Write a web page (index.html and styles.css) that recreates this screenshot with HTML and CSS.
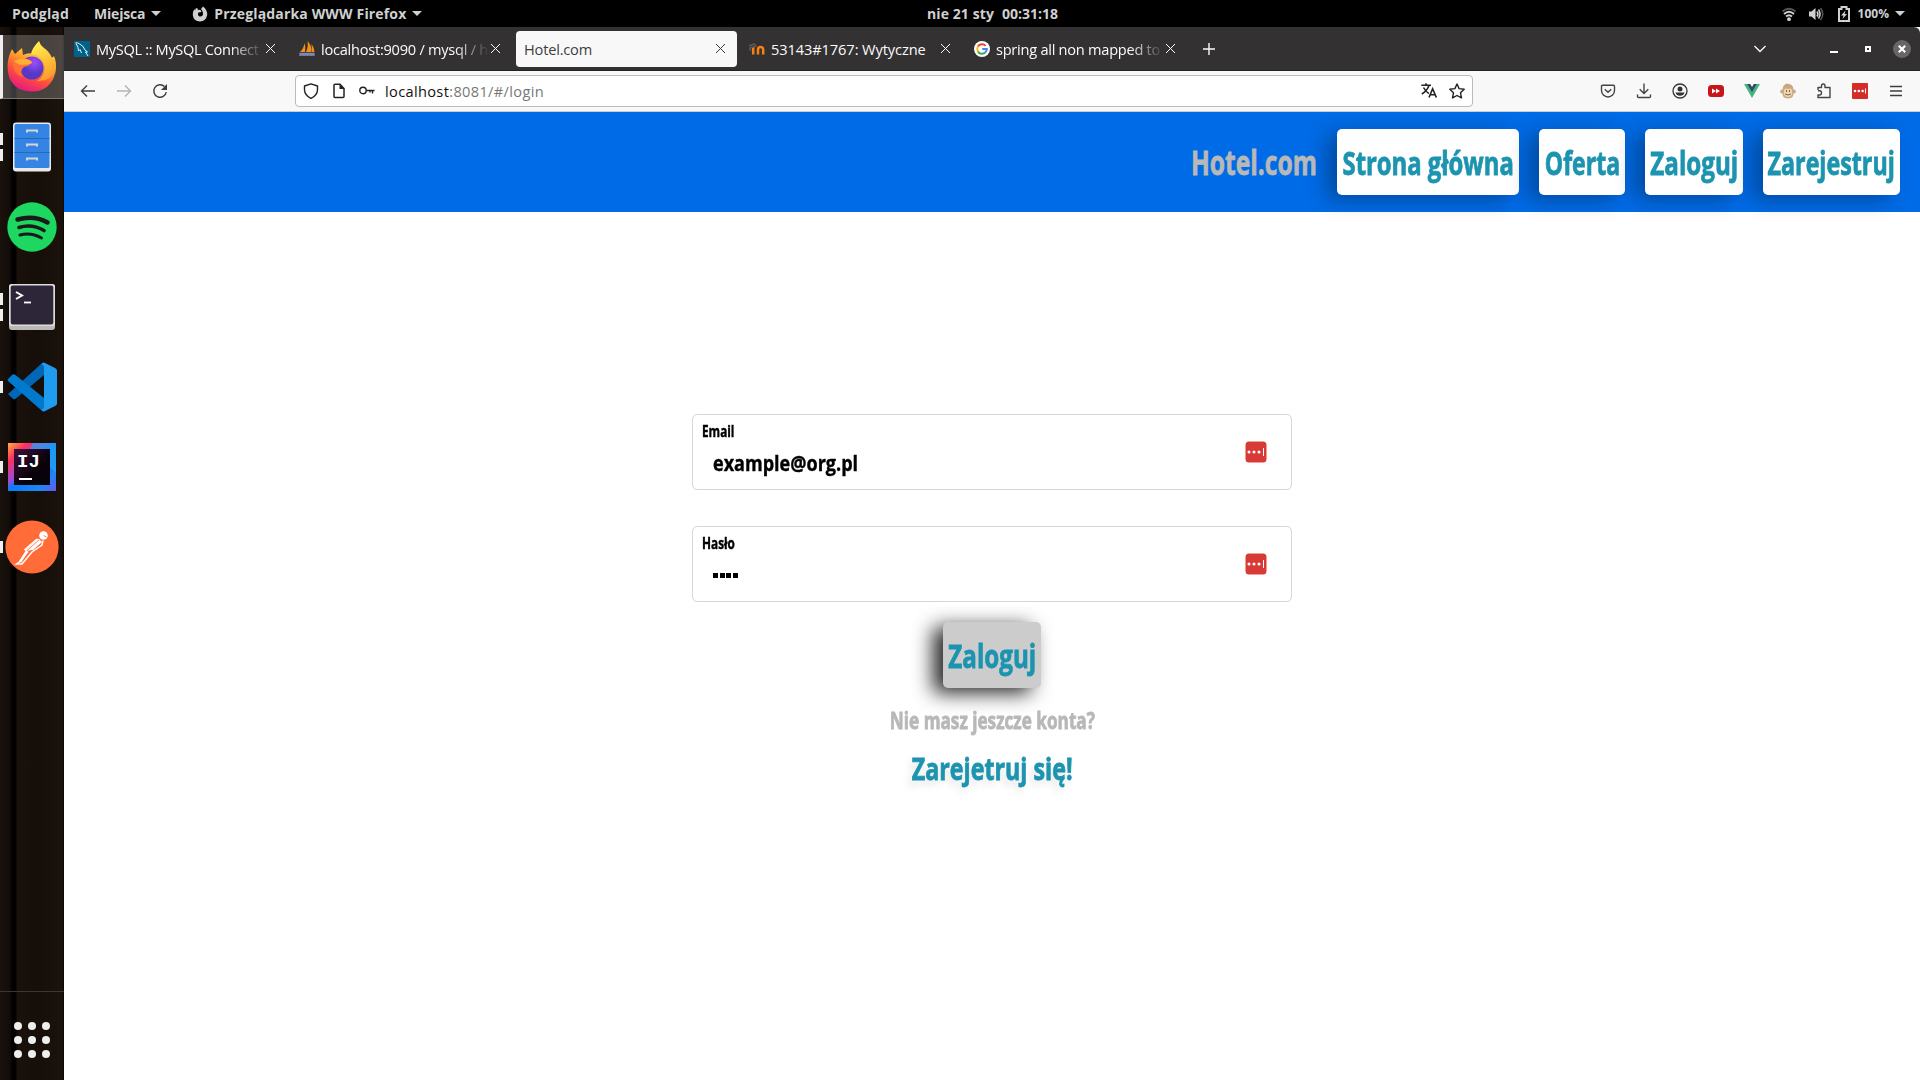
FILE: index.html
```html
<!DOCTYPE html>
<html lang="pl">
<head>
<meta charset="utf-8">
<title>Hotel.com</title>
<link rel="stylesheet" href="styles.css">
</head>
<body>
<header class="topbar">
  <div class="topbar-left">
    <span class="t-view">Podgląd</span>
    <span class="t-places">Miejsca</span><i class="caret"></i>
    <svg class="fx-mini" width="16" height="16" viewBox="0 0 16 16"><path d="M4 2Q6 2 6 4Q9 3 9.500 6L6.500 6.500Q5 9 7.500 10.500Q11 11 11 7.500Q11 5 9 3Q10 1.500 11 .5Q15.500 4 15.200 9Q14 15 8 15.500Q1.500 15 .8 9Q.8 5 2.500 3L3 4.500Z" fill="#d0d0d0"/></svg>
    <span class="t-app">Przeglądarka WWW Firefox</span><i class="caret"></i>
  </div>
  <div class="clock"><span class="t-date">nie 21 sty</span><span class="t-time">00:31:18</span></div>
  <div class="tray">
    <svg width="16" height="16" viewBox="0 0 16 16" fill="none" stroke-width="1.900"><path d="M1.500 5.500Q8 0 14.500 5.500" stroke="#555"/><path d="M3 8Q8 3.500 13 8M5 10.500Q8 8 11 10.500" stroke="#d0d0d0"/><circle cx="8" cy="13.200" r="1.900" fill="#d0d0d0"/></svg>
    <svg width="16" height="16" viewBox="0 0 16 16" fill="none"><path d="M1 5.500H3.500L7.500 2V14L3.500 10.500H1Z" fill="#d0d0d0"/><path d="M9 5.500Q10.800 8 9 10.500M10.500 3.500Q13.600 8 10.500 12.500" stroke="#d0d0d0" stroke-width="1.600"/><path d="M12.500 2Q17 8 12.500 14" stroke="#555" stroke-width="1.500"/></svg>
    <svg class="battery" width="12" height="16" viewBox="0 0 12 16"><path d="M1 3H3.500V1H8.500V3H11V15H1Z" fill="none" stroke="#d0d0d0" stroke-width="2"/><path d="M7.500 4.500L3 9.500H5.500L4.500 13L9 8H6.500Z" fill="#d0d0d0"/></svg>
    <span class="t-pct">100%</span><i class="caret"></i>
  </div>
</header>
<div class="desktop">
<nav class="dock">
  <div class="slot active"><svg width="50" height="52" viewBox="0 0 50 52">
    <defs><linearGradient id="fa" x1=".8" y1="0" x2=".3" y2="1"><stop offset="0" stop-color="#fff44f"/><stop offset=".35" stop-color="#ffa02c"/><stop offset=".65" stop-color="#ff4f3b"/><stop offset="1" stop-color="#e31587"/></linearGradient><radialGradient id="fb" cx=".6" cy=".25"><stop offset="0" stop-color="#a04cff"/><stop offset="1" stop-color="#5339c5"/></radialGradient><linearGradient id="fc" x1=".2" y1="0" x2=".6" y2="1"><stop offset="0" stop-color="#fff44f"/><stop offset="1" stop-color="#ff9a2b"/></linearGradient></defs>
    <path d="M5 9L8 14L15 8L16 15Q21 12 27 14L47 18Q51 28 47 37Q41 51 26 51.500Q8 52 2 37Q-2 22 5 9Z" fill="url(#fa)"/>
    <path d="M32 1Q25 8 24 14Q38 15 38 28Q37 38 30 41Q44 42 48 30Q50 22 47 16L45 18Q42 11 37 8Q33 5 32 1Z" fill="url(#fc)"/>
    <circle cx="25" cy="28" r="11.500" fill="url(#fb)"/>
    <path d="M6 21Q12 18 19 19Q24 19 25 23Q22 26 17 27Q12 31 16 37Q5 34 6 21Z" fill="#ff7139"/><path d="M7 21Q16 16 24 21L25 23Q21 25 16 25Q11 25 7 21Z" fill="#ffae34"/></svg></div>
  <div class="slot"><i class="run r1"></i><i class="run r2"></i><svg width="40" height="50" viewBox="0 0 40 50"><rect x="1" y=".5" width="38" height="49" rx="3" fill="#e9e9e9"/><rect x="2.500" y="2" width="35" height="44" rx="1.500" fill="#3584e4"/><path d="M2.500 16.500H37.500M2.500 30.500H37.500" stroke="#1c6bc8"/><path d="M15 10.500V8.500H25V10.500M15 24.500V22.500H25V24.500M15 38.500V36.500H25V38.500" fill="none" stroke="#d5d5d5" stroke-width="2"/></svg></div>
  <div class="slot"><svg width="50" height="50" viewBox="0 0 50 50"><circle cx="25" cy="25" r="24.700" fill="#1ed760"/><g fill="none" stroke="#1a1a1a" stroke-linecap="round"><path d="M10.500 17.500Q27 13 40.500 20.500" stroke-width="4.500"/><path d="M12 25.500Q25 21.500 37 28.500" stroke-width="3.600"/><path d="M13 33Q24 30 34.500 36" stroke-width="3"/></g></svg></div>
  <div class="slot"><i class="run r1"></i><i class="run r2"></i><svg width="46" height="46" viewBox="0 0 46 46"><rect width="46" height="46" rx="3" fill="#bab9b5"/><rect width="46" height="42" rx="3" fill="#dedddb"/><rect x="1.700" y="1.500" width="42.600" height="39" rx="2" fill="#2c2638"/><path d="M7 8L13 11.500L7 15" fill="none" stroke="#fff" stroke-width="2"/><path d="M15 18.500H22" stroke="#fff" stroke-width="1.800"/></svg></div>
  <div class="slot"><i class="run r0"></i><svg width="50" height="50" viewBox="0 0 50 50"><path d="M1 32L6 37Q7.500 37.500 9 36.500L37 13V1.500Q36 .5 34 2L1 32Z" fill="#0066b8"/><path d="M1 17L5.500 12.500Q7 12 8.500 13L37 36V48Q36 49 34 48L1 19Q.3 18 1 17Z" fill="#007acc"/><path d="M37 .5L48 6Q50 7 50 8.500V41.500Q50 43 48 44L37 49.500Q35.500 49.500 34.500 48L37 46V4L34.500 2Q35.500 .3 37 .5Z" fill="#1f9cf0"/></svg></div>
  <div class="slot"><i class="run r0"></i><svg width="48" height="48" viewBox="0 0 48 48"><defs><linearGradient id="ij" x1="0" y1="0" x2="1" y2="1"><stop offset="0" stop-color="#ffb13b"/><stop offset=".2" stop-color="#fe315d"/><stop offset=".42" stop-color="#9a4bd8"/><stop offset=".5" stop-color="#087cfa"/><stop offset=".8" stop-color="#1e86f5"/><stop offset="1" stop-color="#6b57f0"/></linearGradient><linearGradient id="ik" x2="1" y2="1"><stop offset="0" stop-color="#40103d"/><stop offset=".6" stop-color="#08030a"/></linearGradient></defs><rect width="48" height="48" fill="url(#ij)"/><path d="M25 0H48V30L42 24V6H22Z" fill="#22a4f4" opacity=".7"/><rect x="6" y="6" width="36" height="36" fill="url(#ik)"/><text x="9" y="24" class="ij">IJ</text><path d="M11 36H24" stroke="#fff" stroke-width="2"/></svg></div>
  <div class="slot"><i class="run r0"></i><svg width="54" height="54" viewBox="0 0 54 54"><circle cx="27" cy="27" r="26.600" fill="#ff6c37"/><circle cx="38.500" cy="15.500" r="4.300" fill="#fff"/><path d="M33 18.500L37 22L28 30L20 30.500Z" fill="#fff"/><path d="M32 19L20 29.500L22.500 32L15 41.500L11.500 44H17L27 32L37 25L38 20.500" fill="none" stroke="#fff" stroke-width="1.500"/><path d="M22 31L15 42M35 20L23 30" stroke="#fff" stroke-width="2.500"/><path d="M38.500 15.500L41.500 17M34 20L22 30.500" stroke="#ff6c37" stroke-width=".8"/></svg></div>
  <div class="apps"><i></i><i></i><i></i><i></i><i></i><i></i><i></i><i></i><i></i></div>
</nav>
<main class="window">
  <div class="tabs">
    <div class="tab"><svg width="16" height="16" viewBox="0 0 16 16"><rect width="16" height="16" fill="#00618a"/><path d="M1.500 2Q3 1 5.500 3Q9 4 11 9L13.500 11L11.500 11L14 15M2 2.500L4 6.500L4.500 10L6 8.500L7.500 12" fill="none" stroke="#e8f2f6" stroke-width="1"/></svg><span class="label fade"><b class="tt1">MySQL :: MySQL Connect</b></span><i class="x"></i></div>
    <div class="tab"><svg width="16" height="16" viewBox="0 0 16 16"><path d="M1 11Q5 7 5.500 2Q7 6 6 11ZM7 11Q9.500 6 8.500 0Q13 5 12.500 11ZM13 11L12.500 3Q15.500 7 15.500 11Z" fill="#f29111"/><path d="M.5 12.500H15.500M1 15V12M5 15V12M8 15V12M12 15V12M15 15V12M1 14H15" stroke="#8086b0" stroke-width="1.300"/></svg><span class="label fade"><b class="tt2">localhost:9090 / mysql / h</b></span><i class="x"></i></div>
    <div class="tab selected"><span class="label"><b class="tt3">Hotel.com</b></span><i class="x"></i></div>
    <div class="tab"><svg width="16" height="16" viewBox="0 0 16 16"><path d="M4.200 13.500V6M9 13.500V8.500Q9 6 11.500 6Q14.200 6 14.200 8.500V13.500" fill="none" stroke="#f98012" stroke-width="2.500"/><path d="M0 5L5 3L7 5L1 7V10" fill="none" stroke="#665650" stroke-width="1.500"/></svg><span class="label"><b class="tt4">53143#1767: Wytyczne</b></span><i class="x"></i></div>
    <div class="tab"><svg width="16" height="16" viewBox="0 0 16 16"><circle cx="8" cy="8" r="8" fill="#fff"/><g fill="none" stroke-width="2"><path d="M11.600 4.800A4.800 4.800 0 0 0 3.900 5.600" stroke="#ea4335"/><path d="M3.900 5.600A4.800 4.800 0 0 0 3.900 10.400" stroke="#fbbc05"/><path d="M3.900 10.400A4.800 4.800 0 0 0 11.200 11.600" stroke="#34a853"/><path d="M11.200 11.600A4.800 4.800 0 0 0 12.800 8H8.200" stroke="#4285f4"/></g></svg><span class="label fade"><b class="tt5">spring all non mapped to</b></span><i class="x"></i></div>
    <svg class="plus" width="14" height="14" viewBox="0 0 14 14"><path d="M7 1V13M1 7H13" stroke="#fbfbfb" stroke-width="1.400"/></svg>
    <div class="winctl">
      <svg class="chev" width="14" height="8" viewBox="0 0 14 8"><path d="M1.500 1L7 6.500L12.500 1" fill="none" stroke="#fbfbfb" stroke-width="1.300"/></svg>
      <i class="min"></i><i class="max"></i>
      <svg class="close" width="18" height="18" viewBox="0 0 18 18"><circle cx="9" cy="9" r="9" fill="#686767"/><path d="M5.800 5.800L12.200 12.200M12.200 5.800L5.800 12.200" stroke="#fff" stroke-width="2.200"/></svg>
    </div>
  </div>
  <div class="toolbar">
    <div class="navbtns">
      <svg width="16" height="16" viewBox="0 0 16 16"><path d="M15 8H1.500M7 2.500L1.500 8L7 13.500" fill="none" stroke="#3e3e3e" stroke-width="1.400"/></svg>
      <svg width="16" height="16" viewBox="0 0 16 16"><path d="M1 8H14.500M9 2.500L14.500 8L9 13.500" fill="none" stroke="#b4b4b4" stroke-width="1.400"/></svg>
      <svg width="16" height="16" viewBox="0 0 16 16"><path d="M12.500 3.500A6.300 6.300 0 1 0 14.300 9" fill="none" stroke="#3e3e3e" stroke-width="1.400"/><path d="M15 1V7H9Z" fill="#3e3e3e"/></svg>
    </div>
    <div class="url">
      <svg width="16" height="16" viewBox="0 0 16 16"><path d="M8 .8L14.500 3V7Q14.200 12.500 8 15.400Q1.800 12.500 1.500 7V3Z" fill="none" stroke="#222" stroke-width="1.400" stroke-linejoin="round"/></svg>
      <svg class="page" width="12" height="16" viewBox="0 0 12 16"><path d="M1 2.200Q1 1.200 2 1.200H7L11 5.500V13.500Q11 14.500 10 14.500H2Q1 14.500 1 13.500Z" fill="none" stroke="#222" stroke-width="1.500"/><path d="M6.500 1L11.500 6H6.500Z" fill="#222"/></svg>
      <svg class="key" width="16" height="16" viewBox="0 0 16 16"><circle cx="4" cy="7.500" r="3.200" fill="none" stroke="#222" stroke-width="1.400"/><path d="M7.200 7.500H15.500M13.500 7.500V10.500M11 7.500V9.500" fill="none" stroke="#222" stroke-width="1.400"/></svg>
      <span class="addr">localhost<em>:8081/#/login</em></span>
      <svg class="lang" width="16" height="16" viewBox="0 0 16 16"><path d="M.3 2.200H10M5 .3V2.200M8 2.500Q6 8 .8 11M2.500 4.500Q4.500 8.500 7.800 10.500M8 14.500L11.600 5.800L15.300 14.500M9.200 11.700H14" fill="none" stroke="#222" stroke-width="1.600"/></svg>
      <svg width="16" height="16" viewBox="0 0 16 16"><path d="M8 1L10.100 5.600L15.200 6.200L11.500 9.800L12.500 14.900L8 12.500L3.500 14.900L4.500 9.800L.8 6.200L5.900 5.600Z" fill="none" stroke="#222" stroke-width="1.400" stroke-linejoin="round"/></svg>
    </div>
    <div class="exts">
      <svg width="16" height="16" viewBox="0 0 16 16" fill="none" stroke="#444" stroke-width="1.400"><path d="M2.500 2.300H13.500Q14.500 2.300 14.500 3.300V7.500A6.500 6.500 0 0 1 1.500 7.500V3.300Q1.500 2.300 2.500 2.300ZM4.800 6.300L8 9.300L11.200 6.300"/></svg>
      <svg width="16" height="16" viewBox="0 0 16 16" fill="none" stroke="#444" stroke-width="1.400"><path d="M8 .5V10.500M3.700 6.200L8 10.500L12.300 6.200M1.500 11.500V13.500Q1.500 14.500 2.500 14.500H13.500Q14.500 14.500 14.500 13.500V11.500"/></svg>
      <svg width="16" height="16" viewBox="0 0 16 16"><circle cx="8" cy="8" r="7" fill="none" stroke="#333" stroke-width="1.300"/><circle cx="8" cy="5.900" r="2.500" fill="#333"/><path d="M3.500 9.500H12.500Q11.500 12.700 8 12.700Q4.500 12.700 3.500 9.500Z" fill="#333"/></svg>
      <svg width="16" height="16" viewBox="0 0 16 16"><rect y="2" width="16" height="12" rx="3.500" fill="#c9141b"/><path d="M4 5.500L8 8L4 10.500ZM8 5.500L12 8L8 10.500Z" fill="#fff"/></svg>
      <svg width="16" height="16" viewBox="0 0 16 16"><path d="M0 1H3.500L8 8.800L12.500 1H16L8 15Z" fill="#41b883"/><path d="M3.200 1H6.200L8 4L9.800 1H12.800L8 9.300Z" fill="#35495e"/></svg>
      <svg width="16" height="16" viewBox="0 0 16 16"><circle cx="2.200" cy="8.500" r="2" fill="#c9a780"/><circle cx="13.800" cy="8.500" r="2" fill="#c9a780"/><path d="M2.500 8Q2 2 7 .5L9 1Q14 2 13.500 8Q14.500 15.500 8 15.500Q1.500 15.500 2.500 8Z" fill="#c9a780"/><path d="M4 7Q5 4.500 8 6Q11 4.500 12 7Q13.500 14 8 14Q2.500 14 4 7Z" fill="#f0d6b0"/><path d="M6.500 7V9M9.500 7V9M5 11Q8 13 11 11" stroke="#80654a" fill="none"/></svg>
      <svg width="16" height="16" viewBox="0 0 16 16"><path d="M2 7V4.500H5.500V3Q5.500 1 7.300 1Q9 1 9 3V4.500H14V14.500H2V12H3.500Q5.500 12 5.500 9.800Q5.500 7.800 3.500 7.800H2" fill="none" stroke="#444" stroke-width="1.400" stroke-linejoin="round"/></svg>
      <svg width="16" height="16" viewBox="0 0 16 16"><rect width="16" height="16" rx="1" fill="#d32d27"/><g fill="#fff"><circle cx="3" cy="8" r="1.300"/><circle cx="6.800" cy="8" r="1.300"/><circle cx="10.600" cy="8" r="1.300"/><path d="M13 5.500H14V10.500H13Z"/></g></svg>
      <svg width="16" height="16" viewBox="0 0 16 16"><path d="M2 3.500H14M2 8H14M2 12.500H14" stroke="#3e3e3e" stroke-width="1.300"/></svg>
    </div>
  </div>
  <div class="site">
    <div class="sitebar">
      <div class="brand"><span>Hotel.com</span></div>
      <a class="btn b1"><span>Strona główna</span></a>
      <a class="btn b2"><span>Oferta</span></a>
      <a class="btn b3"><span>Zaloguj</span></a>
      <a class="btn b4"><span>Zarejestruj</span></a>
    </div>
    <form class="login">
      <div class="field"><div class="texts"><label><span>Email</span></label><div class="value"><span>example@org.pl</span></div></div>
        <svg class="lp" width="22" height="22" viewBox="0 0 22 22"><rect x=".5" y=".5" width="21" height="21" rx="3.500" fill="#d93a36"/><g fill="#fff"><circle cx="4" cy="11" r="1.500"/><circle cx="9" cy="11" r="1.500"/><circle cx="14" cy="11" r="1.500"/><path d="M18 7H19V15H18Z"/></g></svg></div>
      <div class="field"><div class="texts"><label><span>Hasło</span></label><div class="value pw"><i></i><i></i><i></i><i></i></div></div>
        <svg class="lp" width="22" height="22" viewBox="0 0 22 22"><rect x=".5" y=".5" width="21" height="21" rx="3.500" fill="#d93a36"/><g fill="#fff"><circle cx="4" cy="11" r="1.500"/><circle cx="9" cy="11" r="1.500"/><circle cx="14" cy="11" r="1.500"/><path d="M18 7H19V15H18Z"/></g></svg></div>
      <a class="btn b3 submit"><span>Zaloguj</span></a>
      <p class="hint"><span>Nie masz jeszcze konta?</span></p>
      <p class="signup"><span>Zarejetruj się!</span></p>
    </form>
  </div>
</main>
</div>
</body>
</html>
```
FILE: styles.css
```css
* { box-sizing: border-box; }
body { margin: 0; width: 1920px; height: 1080px; overflow: hidden; background: #000; font-family: "Open Sans", "Noto Sans", sans-serif; }
svg { display: block; flex: none; }
i { flex: none; }

.topbar { height: 27px; display: grid; grid-template-columns: 1fr auto 1fr; align-items: center; color: #d0d0d0; font-size: 14px; font-weight: 700; line-height: 27px; white-space: pre; }
.topbar-left { display: flex; align-items: center; padding-left: 12px; }
.t-view { letter-spacing: .17px; }
.t-places { margin-left: 25px; letter-spacing: -.2px; }
.t-app { letter-spacing: .16px; }
.caret { border: 5px solid transparent; border-top-color: #d0d0d0; border-bottom: 0; margin-left: 6px; }
.fx-mini { margin: 0 6px 0 31px; }
.clock { display: flex; gap: 8px; padding-left: 65px; }
.t-date { letter-spacing: .1px; }
.tray { display: flex; align-items: center; justify-content: flex-end; padding-right: 15px; }
.tray svg { margin-right: 11px; }
.tray .battery { margin: 0 8px 0 3px; }
.t-pct { font-size: 12px; }

.desktop { display: flex; height: 1053px; }
.dock { width: 64px; display: flex; flex-direction: column; background: linear-gradient(90deg, #1a120d 0, #120c08 10px, #020101 12px, #020101 16px, #1a110b 17px, #150e09 40px, #1b120c 62px, #0a0604 64px); }
.slot { position: relative; height: 80px; flex: none; display: flex; align-items: center; justify-content: center; }
.slot.active { height: 64px; margin: 8px 0; background: rgba(255,255,255,.22); border-left: 3px solid #eee; border-bottom: 1px solid #777; padding: 0 4px 1px 0; }
.run { position: absolute; left: 0; top: 34px; width: 3px; height: 12px; background: #eeeeec; }
.run.r1 { top: 26px; }
.run.r2 { top: 42px; }
.ij { font: 700 19px "Liberation Mono", monospace; fill: #fff; }
.apps { margin-top: auto; height: 89px; border-top: 1px solid #3b3733; display: grid; grid-template-columns: repeat(3, 8px); grid-auto-rows: 8px; gap: 6px; justify-content: center; padding-top: 30px; }
.apps i { border-radius: 50%; background: #eeeeec; }

.window { flex: 1; display: flex; flex-direction: column; background: #fff; }
.tabs { height: 44px; flex: none; display: flex; align-items: center; background: #333132; border-bottom: 1px solid #222; padding-left: 2px; color: #fbfbfb; border-top-right-radius: 6px; }
.tab { width: 221px; height: 36px; margin-right: 4px; display: flex; align-items: center; padding: 0 12px 0 8px; border-radius: 4px; font-size: 14.6px; }
.tab.selected { background: #f8f8f8; color: #3e3e3e; }
.label { flex: 1; min-width: 0; overflow: hidden; white-space: nowrap; margin: 0 2px 0 6px; line-height: 24px; }
.tab.selected .label { margin-left: 0; }
.label b { font-weight: 400; display: inline-block; }
.tt1 { letter-spacing: -.34px; }
.tt2 { letter-spacing: -.25px; }
.tt3 { letter-spacing: -.19px; }
.tt4 { letter-spacing: -.09px; }
.tt5 { letter-spacing: -.26px; }
.fade { -webkit-mask-image: linear-gradient(90deg, #000 calc(100% - 34px), transparent 100%); mask-image: linear-gradient(90deg, #000 calc(100% - 34px), transparent 100%); }
.x { width: 9px; height: 9px; background: linear-gradient(45deg, transparent 45%, currentColor 45%, currentColor 55%, transparent 55%), linear-gradient(-45deg, transparent 45%, currentColor 45%, currentColor 55%, transparent 55%); }
.plus { margin-left: 11px; }
.winctl { margin-left: auto; display: flex; align-items: center; padding-right: 9px; }
.chev { margin-right: 63px; }
.min { width: 8px; height: 2px; background: #fff; margin: 6px 27px 0 0; }
.max { width: 6px; height: 6px; border: 2px solid #fff; margin-right: 22px; }

.toolbar { height: 41px; flex: none; display: flex; align-items: center; background: #f8f8f8; border-bottom: 1px solid #ccc; padding: 0 16px; }
.navbtns { display: flex; gap: 20px; width: 215px; }
.url { width: 1178px; height: 32px; display: flex; align-items: center; background: #fff; border: 1px solid #bbb; border-radius: 4px; padding: 0 7px; font-size: 14.6px; }
.page { margin-left: 14px; }
.key { margin: 0 10px 0 14px; }
.addr { color: #111; letter-spacing: .34px; }
.addr em { font-style: normal; color: #777; }
.lang { margin: 0 12px 0 auto; }
.exts { display: flex; gap: 20px; margin-left: auto; }

/* The site face is condensed, so each label is narrowed to its own width. */
.site { flex: 1; background: #fff; font-weight: 700; }
.site span { display: inline-block; white-space: nowrap; }
.sitebar { height: 100px; background: #006be6; display: flex; justify-content: flex-end; align-items: center; gap: 20px; padding-right: 20px; }
.brand { width: 125px; font-size: 34px; color: #b8b8b8; display: flex; justify-content: center; }
.brand span { transform: translateX(-1px) scaleX(.725); }
.brand, .btn, .hint, .signup { -webkit-text-stroke: .8px currentColor; }
.value, label { -webkit-text-stroke: .4px currentColor; }
.btn { height: 66px; display: flex; align-items: center; justify-content: center; border-radius: 5px; background: #fff; color: #1c94b0; font-size: 31.5px; box-shadow: -10px 5px 20px rgba(0,0,0,.3); }
.b1 { width: 182px; }
.b2 { width: 86px; }
.b3 { width: 98px; }
.b4 { width: 137px; }
.b1 span { transform: scaleX(.757); }
.b2 span { transform: scaleX(.732); }
.b3 span { transform: scaleX(.768); }
.b4 span { transform: scaleX(.738); }
.login { width: 600px; margin: 202px auto 0; display: flex; flex-direction: column; align-items: center; }
.field { width: 600px; height: 76px; margin-bottom: 36px; border: 1px solid #d5d5dd; border-radius: 5px; display: flex; justify-content: space-between; padding: 0 24px 0 9px; }
.field + .field { margin-bottom: 20px; }
.texts { display: flex; flex-direction: column; }
label { font-size: 15.5px; line-height: 20px; margin-top: 6px; color: #000; }
label span { transform: scaleX(.76); transform-origin: 0 50%; }
.value { font-size: 22px; line-height: 28px; margin: 7px 0 0 11px; }
.value span { transform: scaleX(.82); transform-origin: 0 50%; }
.pw { display: flex; gap: 1.5px; padding-top: 13px; }
.pw i { width: 5px; height: 5px; background: #000; }
.lp { margin-top: 26px; }
.submit { background: #ccc; box-shadow: -10px 5px 20px rgba(0,0,0,.85); }
p { margin: 0; display: flex; justify-content: center; white-space: nowrap; }
.hint { font-size: 22.5px; color: #b8b8b8; line-height: 30px; margin-top: 18px; }
.hint span { transform: scaleX(.763); }
.signup { font-size: 31px; color: #1c94b0; line-height: 42px; margin-top: 11px; text-shadow: -5px 5px 10px rgba(0,0,0,.12); }
.signup span { transform: scaleX(.75); }
```
